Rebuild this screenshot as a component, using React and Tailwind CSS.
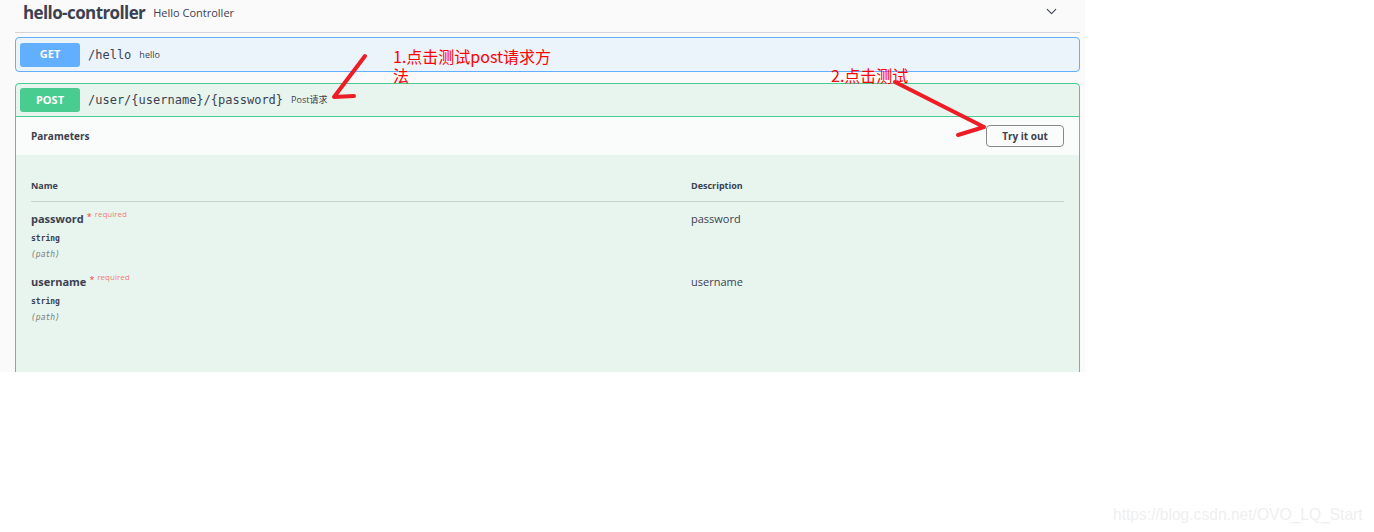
import { ChevronDown } from "lucide-react";

const params = [
  { name: "password", desc: "password" },
  { name: "username", desc: "username" },
];

function Badge({ label, color }) {
  return (
    <div
      className={`w-[60px] h-[24px] rounded-[3px] flex items-center justify-center text-white text-[11px] font-bold shrink-0 ${color}`}
    >
      {label}
    </div>
  );
}

export default function App() {
  return (
    <div className="relative w-[1374px] h-[532px] bg-white overflow-hidden font-['Open_Sans',sans-serif] text-[#3b4151]">
      <div className="w-[1085px] h-[372px] bg-[#fafafa] overflow-hidden">
        {/* tag header */}
        <div className="ml-[15px] mr-[5px] h-[33px] border-b border-[#d3d3d8] flex items-start pt-[4px] pl-[8px] pr-[20px]">
          <span className="text-[17px] font-bold tracking-[-0.6px] leading-[17px]">hello-controller</span>
          <span className="ml-[8px] text-[11px] leading-[17px]">Hello Controller</span>
          <ChevronDown className="ml-auto -mt-[1px] w-[17px] h-[17px]" strokeWidth={1.5} />
        </div>

        {/* GET */}
        <div className="ml-[15px] mr-[5px] mt-[4px] h-[35px] rounded-[4px] border border-[#61affe] bg-[#ebf3fb] flex items-center px-[4px]">
          <Badge label="GET" color="bg-[#61affe]" />
          <span className="ml-[8px] font-['DejaVu_Sans_Mono',monospace] text-[12px]">/hello</span>
          <span className="ml-[8px] text-[9px]">hello</span>
        </div>

        {/* POST */}
        <div className="ml-[15px] mr-[5px] mt-[11px] h-[300px] rounded-t-[4px] border border-[#49cc90] bg-[#e7f5ee]">
          <div className="h-[33px] flex items-center px-[4px] border-b border-[#49cc90]">
            <Badge label="POST" color="bg-[#49cc90]" />
            <span className="ml-[8px] font-['DejaVu_Sans_Mono',monospace] text-[12px]">/user/&#123;username&#125;/&#123;password&#125;</span>
            <span className="ml-[8px] text-[9px]" style={{ fontFamily: '"Open Sans", "Noto Sans CJK SC", sans-serif' }}>Post请求</span>
          </div>

          <div className="h-[38px] bg-[#fafcfb] flex items-center pl-[15px] pr-[15px]">
            <span className="text-[10px] font-bold">Parameters</span>
            <button className="ml-auto w-[78px] h-[22px] rounded-[4px] border border-[#888] text-[10px] font-bold bg-transparent">
              Try it out
            </button>
          </div>

          <div className="px-[15px] pt-[24px]">
            <div className="grid grid-cols-[660px_1fr] border-b border-[#c3d3cb] pb-[8px] text-[9px] font-bold">
              <span>Name</span>
              <span>Description</span>
            </div>
            {params.map((p) => (
              <div key={p.name} className="grid grid-cols-[660px_1fr] h-[63px] pt-[8px]">
                <div>
                  <div className="flex items-start leading-none">
                    <span className="text-[11px] font-bold mt-[3px]">{p.name}</span>
                    <span className="text-[#f93e3e] text-[9px] ml-[3px] mt-[2px]">*</span>
                    <span className="text-[#f93e3e]/70 text-[8px] ml-[3px]">required</span>
                  </div>
                  <div className="font-['DejaVu_Sans_Mono',monospace] text-[8px] mt-[9px] font-semibold">string</div>
                  <div className="font-['DejaVu_Sans_Mono',monospace] text-[8px] italic text-[#808080] mt-[4px]">(path)</div>
                </div>
                <div className="text-[11px] mt-[1px]">{p.desc}</div>
              </div>
            ))}
          </div>
        </div>
      </div>

      {/* annotations */}
      <div
        className="absolute left-[393px] top-[48px] text-[16px] leading-[16px] text-[#ff0000]"
        style={{ fontFamily: '"Noto Sans CJK SC", sans-serif' }}
      >
        1.点击测试post请求方
      </div>
      <div
        className="absolute left-[393px] top-[67px] text-[16px] leading-[16px] text-[#ff0000]"
        style={{ fontFamily: '"Noto Sans CJK SC", sans-serif' }}
      >
        法
      </div>
      <div
        className="absolute left-[831px] top-[67px] text-[16px] leading-[16px] text-[#ff0000]"
        style={{ fontFamily: '"Noto Sans CJK SC", sans-serif' }}
      >
        2.点击测试
      </div>
      <svg className="absolute left-0 top-0" width="1374" height="532">
        <g stroke="#ee1c25" strokeWidth="4" strokeLinecap="round" strokeLinejoin="round" fill="none">
          <path d="M365 56 L334 97 L354 96" />
          <path d="M895 82 L984 127 L958 135" />
        </g>
      </svg>

      <div className="absolute left-[1113px] top-[503px] text-[15.6px] text-[#efefef] font-['Liberation_Sans',sans-serif]">
        https://blog.csdn.net/OVO_LQ_Start
      </div>
    </div>
  );
}
